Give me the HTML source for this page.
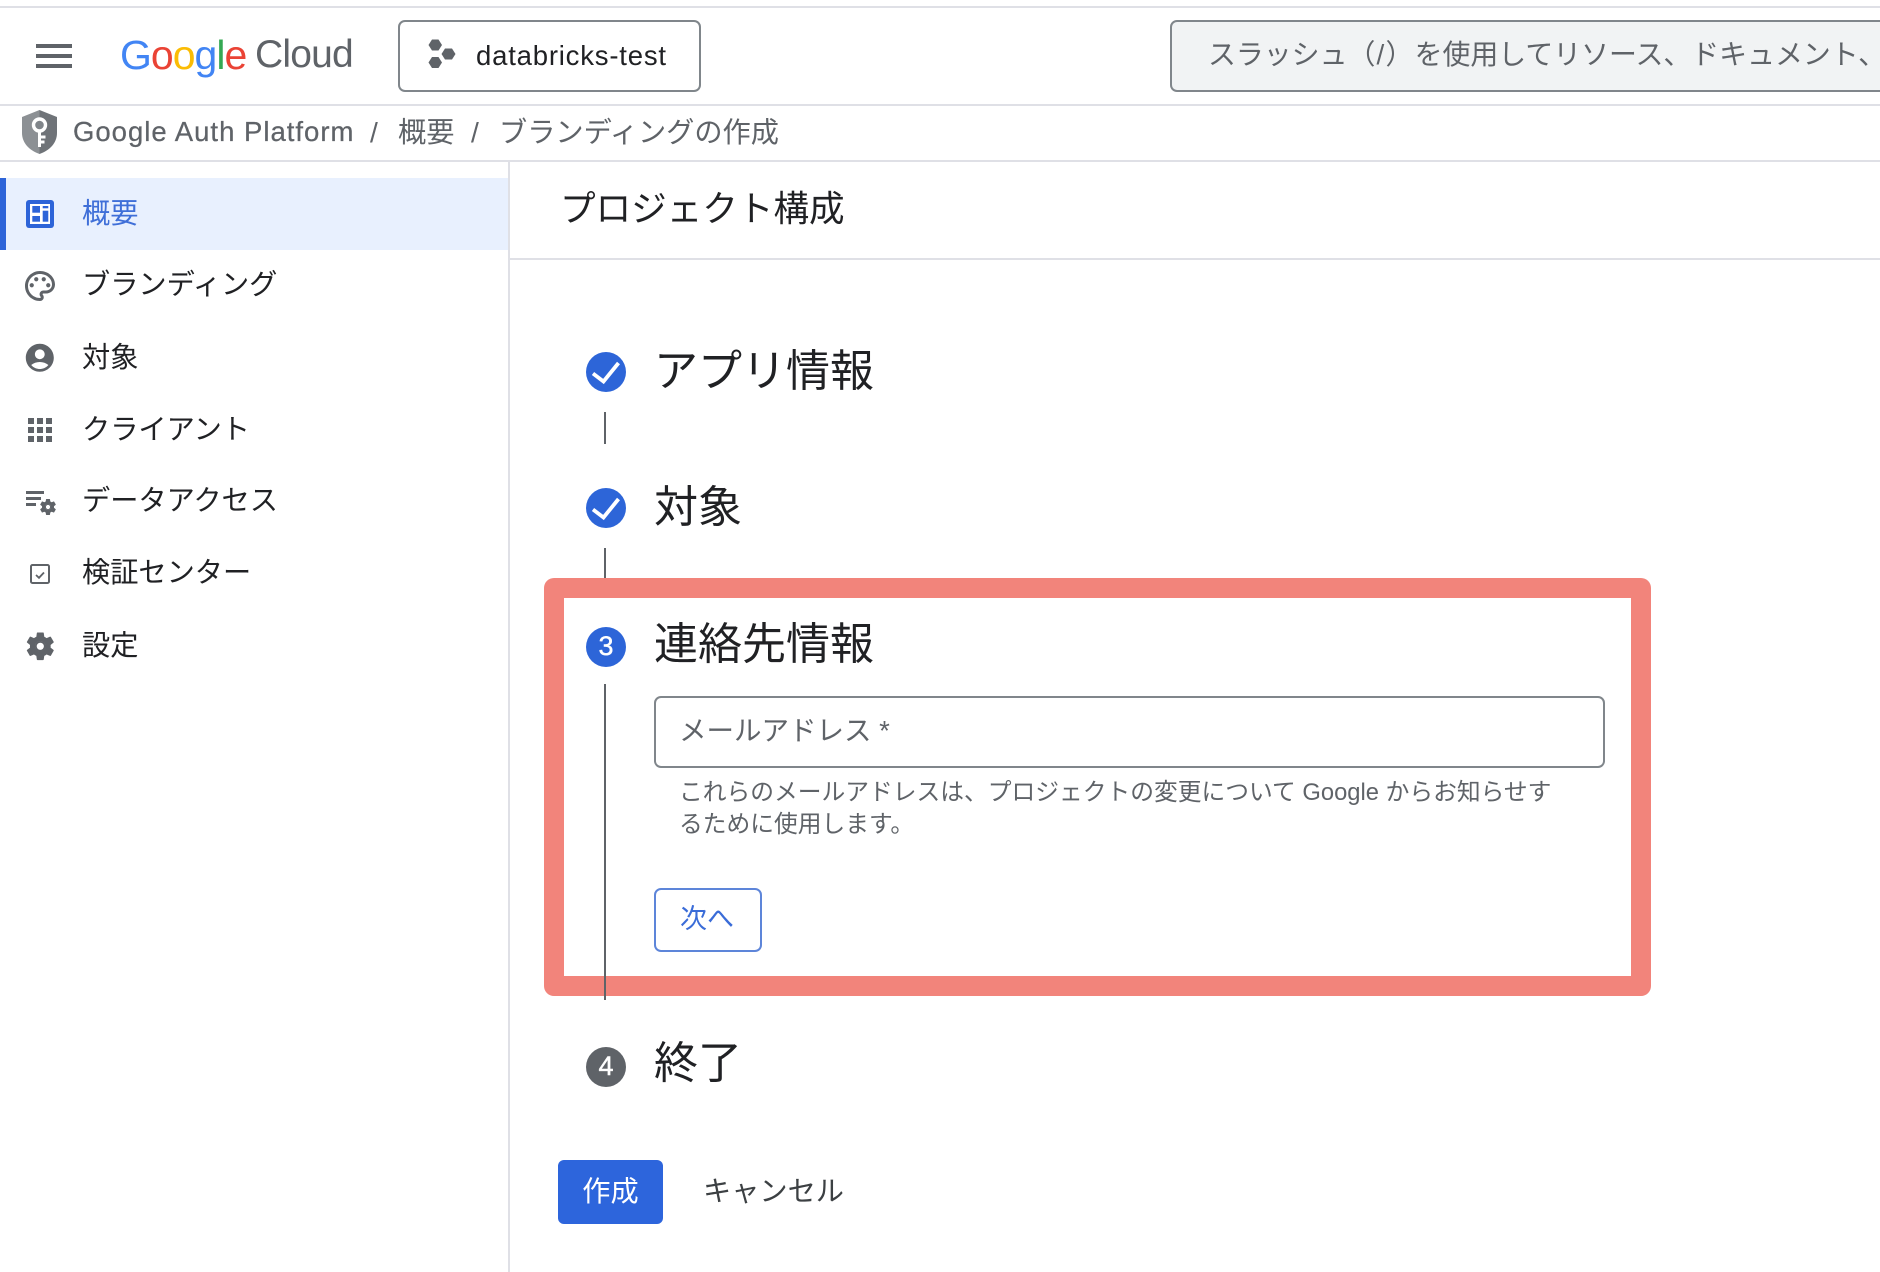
<!DOCTYPE html>
<html lang="ja">
<head>
<meta charset="utf-8">
<title>プロジェクト構成</title>
<style>
*{box-sizing:border-box;margin:0;padding:0}
html,body{width:1880px;height:1272px;overflow:hidden;background:#fff}
body{position:relative;font-family:"Liberation Sans","Noto Sans CJK JP",sans-serif;color:#202124;text-spacing-trim:space-all}
.t{position:absolute;white-space:nowrap;line-height:40px;height:40px;font-size:28.2px}
.b{position:absolute;background:#dfe0e6}
svg{position:absolute;overflow:visible}
.nav{color:#3c4043}
.title{font-size:44px;line-height:60px;height:60px;color:#202124}
.vl{position:absolute;left:604px;width:2px;background:#5f6368}
.g{color:#5f6368}
</style>
</head>
<body>
<!-- header rules -->
<div class="b" style="left:0;top:6px;width:1880px;height:2px"></div>
<div class="b" style="left:0;top:104px;width:1880px;height:2px"></div>
<div class="b" style="left:0;top:160px;width:1880px;height:2px"></div>
<div class="b" style="left:510px;top:258px;width:1370px;height:2px"></div>
<div class="b" style="left:508px;top:161px;width:2px;height:1111px"></div>

<!-- hamburger -->
<div style="position:absolute;left:36px;top:44px;width:36px;height:4px;background:#5f6368"></div>
<div style="position:absolute;left:36px;top:54px;width:36px;height:4px;background:#5f6368"></div>
<div style="position:absolute;left:36px;top:64px;width:36px;height:4px;background:#5f6368"></div>

<!-- logo -->
<div class="t" style="left:120px;top:30px;height:50px;line-height:50px;font-size:41px;letter-spacing:-1px"><span style="color:#4285f4">G</span><span style="color:#ea4335">o</span><span style="color:#fbbc04">o</span><span style="color:#4285f4">g</span><span style="color:#34a853">l</span><span style="color:#ea4335">e</span></div>
<div class="t" style="left:255px;top:30px;height:50px;line-height:50px;font-size:39px;letter-spacing:-.8px;color:#5f6368">Cloud</div>

<!-- project selector -->
<div style="position:absolute;left:398px;top:20px;width:303px;height:72px;border:2px solid #80868b;border-radius:7px"></div>
<svg style="left:0;top:0" width="1" height="1">
<polygon fill="#5f6368" points="428.5,45 432,39.5 438.5,39.5 442,45 438.5,50.5 432,50.5"/>
<polygon fill="#5f6368" points="441.5,54 445,48.5 452,48.5 455.5,54 452,59.5 445,59.5"/>
<polygon fill="#5f6368" points="428.5,62.5 432,57 438.5,57 442,62.5 438.5,68 432,68"/>
</svg>
<div class="t" style="left:476px;top:36px;font-size:27.5px;letter-spacing:.8px">databricks-test</div>

<!-- search -->
<div style="position:absolute;left:1170px;top:20px;width:730px;height:72px;border:2px solid #80868b;border-radius:7px;background:#f1f3f4"></div>
<div class="t g" style="left:1208px;top:35px;font-size:27.9px">スラッシュ<span style="letter-spacing:1.2px">（/）</span>を使用してリソース、ドキュメント、</div>

<!-- breadcrumb -->
<svg style="left:0;top:0" width="1" height="1">
<path d="M39.5 110L22 117v16c0 10 7.500 17.500 17.500 21z" fill="#8c9094"/>
<path d="M39.500 110L57 117v16c0 10-7.500 17.500-17.500 21z" fill="#6f7378"/>
<circle cx="39.500" cy="125" r="6" fill="#80858a" stroke="#fff" stroke-width="3.400"/>
<path d="M39.500 131v16M39.500 137h6M39.500 142h5" stroke="#fff" stroke-width="3" fill="none"/>
</svg>
<div class="t g" style="left:73px;top:112px;font-size:27.5px;letter-spacing:1px;-webkit-text-stroke:.25px #5f6368">Google Auth Platform</div>
<div class="t g" style="left:370px;top:112px">/</div>
<div class="t g" style="left:398px;top:112px">概要</div>
<div class="t g" style="left:471px;top:112px">/</div>
<div class="t g" style="left:499px;top:112px">ブランディングの作成</div>

<!-- sidebar -->
<div style="position:absolute;left:0;top:178px;width:508px;height:72px;background:#e8f0fe"></div>
<div style="position:absolute;left:0;top:178px;width:6px;height:72px;background:#2d64d8"></div>
<svg style="left:26px;top:200px" width="28" height="28" viewBox="0 0 28 28">
<rect width="28" height="28" rx="3" fill="#2d64d8"/>
<rect x="4" y="4" width="20" height="20" fill="#fff"/>
<rect x="6.300" y="6" width="7.700" height="6.700" fill="#2d64d8"/>
<rect x="6.300" y="16" width="7.700" height="5.700" fill="#2d64d8"/>
<rect x="16.700" y="6" width="5.600" height="2.300" fill="#2d64d8"/>
<rect x="16.700" y="10.700" width="5.600" height="11" fill="#2d64d8"/>
</svg>
<div class="t" style="left:82px;top:193px;color:#3f6fd8">概要</div>

<svg style="left:22px;top:268px" width="36" height="36" viewBox="0 0 24 24" fill="#5f6368">
<path d="M12 22C6.490 22 2 17.510 2 12S6.490 2 12 2s10 4.040 10 9c0 3.310-2.690 6-6 6h-1.770c-.28 0-.5.22-.5.5 0 .12.05.23.13.33.41.47.64 1.060.64 1.670 0 1.380-1.120 2.500-2.500 2.500zm0-18c-4.410 0-8 3.590-8 8s3.590 8 8 8c.28 0 .5-.22.5-.5a.54.54 0 0 0-.14-.35c-.41-.46-.63-1.050-.63-1.650 0-1.380 1.120-2.500 2.500-2.500H16c2.210 0 4-1.790 4-4 0-3.860-3.590-7-8-7z"/>
<circle cx="6.500" cy="11.500" r="1.400"/><circle cx="9.500" cy="7.500" r="1.400"/><circle cx="14.500" cy="7.500" r="1.400"/><circle cx="17.500" cy="11.500" r="1.400"/>
</svg>
<div class="t nav" style="left:82px;top:264px;color:#202124">ブランディング</div>

<svg style="left:23.200px;top:341.200px" width="33.600" height="33.600" viewBox="0 0 24 24" fill="#5f6368">
<path d="M12 2C6.480 2 2 6.480 2 12s4.480 10 10 10 10-4.480 10-10S17.520 2 12 2zm0 4c1.930 0 3.500 1.570 3.500 3.500S13.930 13 12 13s-3.500-1.570-3.500-3.500S10.070 6 12 6zm0 14c-2.030 0-4.430-.82-6.140-2.880C7.550 15.800 9.680 15 12 15s4.450.8 6.140 2.120C16.430 19.180 14.030 20 12 20z"/>
</svg>
<div class="t nav" style="left:82px;top:337px;color:#202124">対象</div>

<svg style="left:28px;top:418px" width="24" height="24" viewBox="0 0 24 24" fill="#5f6368">
<rect x="0" y="0" width="6" height="6"/><rect x="9" y="0" width="6" height="6"/><rect x="18" y="0" width="6" height="6"/>
<rect x="0" y="9" width="6" height="6"/><rect x="9" y="9" width="6" height="6"/><rect x="18" y="9" width="6" height="6"/>
<rect x="0" y="18" width="6" height="6"/><rect x="9" y="18" width="6" height="6"/><rect x="18" y="18" width="6" height="6"/>
</svg>
<div class="t nav" style="left:82px;top:409px;color:#202124">クライアント</div>

<svg style="left:0;top:0" width="1" height="1" fill="#5f6368">
<rect x="26" y="491" width="18" height="3"/>
<rect x="26" y="497" width="15" height="3"/>
<rect x="26" y="503" width="10" height="3"/>
</svg>
<svg style="left:38px;top:497px" width="20" height="20" viewBox="0 0 24 24" fill="#5f6368">
<path d="M19.140 12.940c.04-.3.06-.61.06-.94 0-.32-.02-.64-.07-.94l2.030-1.580c.18-.14.23-.41.12-.61l-1.920-3.320c-.12-.22-.37-.29-.59-.22l-2.390.96c-.5-.38-1.030-.7-1.620-.94l-.36-2.540c-.04-.24-.24-.41-.48-.41h-3.840c-.24 0-.43.17-.47.41l-.36 2.540c-.59.24-1.130.57-1.620.94l-2.390-.96c-.22-.08-.47 0-.59.22L2.740 8.870c-.12.21-.08.47.12.61l2.030 1.580c-.05.3-.09.63-.09.94s.02.64.07.94l-2.030 1.580c-.18.14-.23.41-.12.61l1.920 3.320c.12.22.37.29.59.22l2.390-.96c.5.38 1.030.7 1.620.94l.36 2.540c.05.24.24.41.48.41h3.840c.24 0 .44-.17.47-.41l.36-2.540c.59-.24 1.130-.56 1.620-.94l2.390.96c.22.08.47 0 .59-.22l1.920-3.320c.12-.22.07-.47-.12-.61l-2.010-1.580zM12 15.600c-1.980 0-3.600-1.620-3.600-3.600s1.620-3.600 3.600-3.600 3.600 1.620 3.600 3.600-1.620 3.600-3.600 3.600z"/>
<circle cx="12" cy="12" r="3.100" fill="none" stroke="#5f6368" stroke-width="1.200"/>
</svg>
<div class="t nav" style="left:82px;top:480px;color:#202124">データアクセス</div>

<svg style="left:30px;top:564px" width="20" height="20" viewBox="0 0 20 20" fill="none" stroke="#5f6368">
<rect x="1" y="1" width="18" height="18" rx="1.500" stroke-width="2"/>
<path d="M6 11l3 2.800 5-5.300" stroke-width="1.800"/>
</svg>
<div class="t nav" style="left:82px;top:552px;color:#202124">検証センター</div>

<svg style="left:22.700px;top:628.700px" width="34.600" height="34.600" viewBox="0 0 24 24" fill="#5f6368">
<path d="M19.140 12.940c.04-.3.06-.61.06-.94 0-.32-.02-.64-.07-.94l2.030-1.580c.18-.14.23-.41.12-.61l-1.920-3.320c-.12-.22-.37-.29-.59-.22l-2.390.96c-.5-.38-1.030-.7-1.620-.94l-.36-2.540c-.04-.24-.24-.41-.48-.41h-3.840c-.24 0-.43.17-.47.41l-.36 2.540c-.59.24-1.130.57-1.620.94l-2.390-.96c-.22-.08-.47 0-.59.22L2.740 8.870c-.12.21-.08.47.12.61l2.030 1.580c-.05.3-.09.63-.09.94s.02.64.07.94l-2.030 1.580c-.18.14-.23.41-.12.61l1.920 3.320c.12.22.37.29.59.22l2.390-.96c.5.38 1.030.7 1.620.94l.36 2.540c.05.24.24.41.48.41h3.840c.24 0 .44-.17.47-.41l.36-2.540c.59-.24 1.130-.56 1.620-.94l2.390.96c.22.08.47 0 .59-.22l1.920-3.320c.12-.22.07-.47-.12-.61l-2.010-1.580zM12 15.600c-1.980 0-3.600-1.620-3.600-3.600s1.620-3.600 3.600-3.600 3.600 1.620 3.600 3.600-1.620 3.600-3.600 3.600z"/>
<circle cx="12" cy="12" r="3.100" fill="none" stroke="#5f6368" stroke-width="1.200"/>
</svg>
<div class="t nav" style="left:82px;top:625px;color:#202124">設定</div>

<!-- main -->
<div class="t" style="left:560px;top:184px;height:50px;line-height:50px;font-size:35.6px">プロジェクト構成</div>

<!-- red box -->
<div style="position:absolute;left:544px;top:578px;width:1107px;height:418px;border:20px solid #f2847b;border-radius:10px"></div>

<!-- step connector lines -->
<div class="vl" style="top:412px;height:32px"></div>
<div class="vl" style="top:548px;height:30px"></div>
<div class="vl" style="top:684px;height:316px"></div>

<!-- steps -->
<svg style="left:0;top:0" width="1" height="1">
<circle cx="606" cy="372" r="20" fill="#2d65d8"/>
<path d="M593 373.500l10.500 8 15-18.500" fill="none" stroke="#fff" stroke-width="3.800"/>
<circle cx="606" cy="508" r="20" fill="#2d65d8"/>
<path d="M593 509.500l10.500 8 15-18.500" fill="none" stroke="#fff" stroke-width="3.800"/>
<circle cx="606" cy="647" r="20" fill="#2d65d8"/>
<circle cx="606" cy="1067" r="20" fill="#5f6368"/>
</svg>
<div class="t" style="left:586px;top:626px;width:40px;text-align:center;font-size:27px;color:#fff;-webkit-text-stroke:.4px #fff">3</div>
<div class="t" style="left:586px;top:1046px;width:40px;text-align:center;font-size:27px;color:#fff;-webkit-text-stroke:.4px #fff">4</div>

<div class="t title" style="left:654px;top:342px">アプリ情報</div>
<div class="t title" style="left:654px;top:478px">対象</div>
<div class="t title" style="left:654px;top:615px">連絡先情報</div>
<div class="t title" style="left:654px;top:1034px">終了</div>

<!-- input -->
<div style="position:absolute;left:654px;top:696px;width:951px;height:72px;border:2px solid #80868b;border-radius:7px;background:#fff"></div>
<div class="t g" style="left:679px;top:711px;font-size:27.5px">メールアドレス *</div>
<div class="t g" style="left:679px;top:773px;font-size:23.75px">これらのメールアドレスは、プロジェクトの変更について Google からお知らせす</div>
<div class="t g" style="left:679px;top:805px;font-size:23.75px">るために使用します。</div>

<!-- next -->
<div style="position:absolute;left:654px;top:888px;width:108px;height:64px;border:2px solid #5d85d9;border-radius:7px;background:#fff"></div>
<div class="t" style="left:680px;top:899px;color:#3a6cd8;font-size:27px">次へ</div>

<!-- actions -->
<div style="position:absolute;left:558px;top:1160px;width:105px;height:64px;border-radius:6px;background:#2d65dc"></div>
<div class="t" style="left:558px;top:1171px;width:105px;text-align:center;color:#fff">作成</div>
<div class="t" style="left:703px;top:1171px;color:#3c4043">キャンセル</div>
</body>
</html>
